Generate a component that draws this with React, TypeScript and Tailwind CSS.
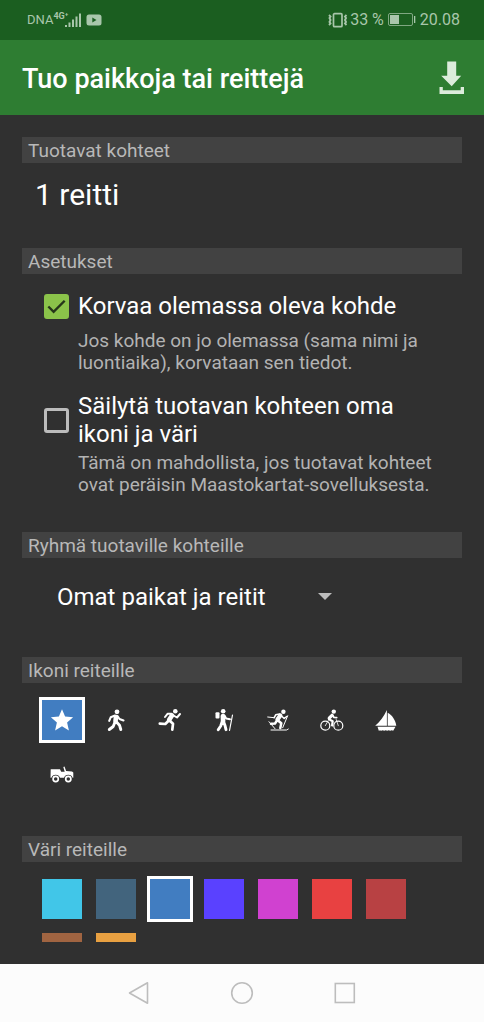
import { ReactNode, useState } from "react";
import { clsx } from "clsx";

interface RouteIcon {
  id: string;
  label: string;
  drawing: ReactNode;
}

const ROUTE_ICONS: RouteIcon[] = [
  {
    id: "star",
    label: "Tähti",
    drawing: (
      <path fill="currentColor" d="M12 1.3l3.100 7.100 8 .8-6 5.200 1.800 8-6.900-4.200-6.900 4.200 1.800-8-6-5.200 8-.8z" />
    ),
  },
  {
    id: "walk",
    label: "Kävely",
    drawing: (
      <g fill="none" stroke="currentColor" strokeLinecap="round" strokeLinejoin="round">
        <circle cx="13" cy="3.800" r="2.400" fill="currentColor" stroke="none" />
        <path strokeWidth="4.600" d="M12 9l-.5 4" />
        <path strokeWidth="2.100" d="M11 7.500L6.700 9.300l-1.500 3.500M13.500 8l2 3 4 1.500" />
        <path strokeWidth="2.900" d="M12.500 14l3 3.200 1.300 4.300M11 14l-1.800 4.500-3.900 3" />
      </g>
    ),
  },
  {
    id: "run",
    label: "Juoksu",
    drawing: (
      <g fill="none" stroke="currentColor" strokeLinecap="round" strokeLinejoin="round">
        <circle cx="17.300" cy="3.300" r="2.300" fill="currentColor" stroke="none" />
        <path strokeWidth="4.600" d="M14 7.500l-2.800 4.300" />
        <path strokeWidth="2" d="M13.500 5.800H9.500L7 9M15.500 7.500l3.500 2 3-3.500" />
        <path strokeWidth="2.700" d="M11.500 12.500l3.500 3.300-.7 5.900M10.300 13l-3 3-5.500-.4" />
      </g>
    ),
  },
  {
    id: "hike",
    label: "Vaellus",
    drawing: (
      <g fill="none" stroke="currentColor" strokeLinecap="round" strokeLinejoin="round">
        <circle cx="11.200" cy="3.200" r="2.300" fill="currentColor" stroke="none" />
        <rect x="3.500" y="4.300" width="4" height="6.200" rx="1" fill="currentColor" stroke="none" />
        <path strokeWidth="4.600" d="M10.900 8l.2 5" />
        <path strokeWidth="2" d="M12.500 7.500l1.700 3 3.800.8" />
        <path strokeWidth="2.900" d="M11.500 13.500l1.500 4 1 4.200M10.200 13.500l-1.500 4.500-2.500 3.700" />
        <path strokeWidth="1.200" d="M20.500 7l-3 15.500" />
      </g>
    ),
  },
  {
    id: "ski",
    label: "Hiihto",
    drawing: (
      <g fill="none" stroke="currentColor" strokeLinecap="round" strokeLinejoin="round">
        <circle cx="17.400" cy="3.800" r="2.200" fill="currentColor" stroke="none" />
        <path strokeWidth="4.200" d="M14.300 7.500l-2.800 4" />
        <path strokeWidth="1.600" d="M13.500 6l-3.800.8-1.500 2.900M15.500 8l2.700 2.500 2.500-2" />
        <path strokeWidth="2.500" d="M12 12.500l3.300 2.800-1 4.700M11 12.500l-2 3-4 .3" />
        <path strokeWidth="1" d="M1.700 9l6.500.7M21.700 7.700l-5 12M3 13.700l6 7M5 22h15.500l1.800-1" />
      </g>
    ),
  },
  {
    id: "bike",
    label: "Pyöräily",
    drawing: (
      <g fill="none" stroke="currentColor" strokeLinecap="round" strokeLinejoin="round">
        <circle cx="13.800" cy="3.600" r="2.200" fill="currentColor" stroke="none" />
        <circle cx="5.300" cy="17.700" r="4.500" strokeWidth="1.200" />
        <circle cx="18.300" cy="17.700" r="4.500" strokeWidth="1.200" />
        <path strokeWidth="3.200" d="M12 7.300L9.200 10.200" />
        <path strokeWidth="1.700" d="M12.500 7l1.500 2.500 2.700.2" />
        <path strokeWidth="2.200" d="M9 11.300l3.700 1.900-.6 4.300" />
        <path strokeWidth=".8" d="M5.300 17.700l2.900-5M16.200 11.500l2.100 6.200" />
      </g>
    ),
  },
  {
    id: "boat",
    label: "Veneily",
    drawing: (
      <g fill="currentColor">
        <path d="M12.900 2v15.700H1.200C6 13.500 10 8.500 12.900 2z" />
        <path d="M13.700 4.800c4.500 2.500 7.600 7 8.600 12.900h-8.600z" />
        <path d="M3.500 18.800h18l-2.300 4c-1-.7-2-.7-3 0-1-.7-2-.7-3 0-1-.7-2-.7-3 0-1-.7-2-.7-3 0-.8-.5-1.600-.5-2.400 0z" />
      </g>
    ),
  },
  {
    id: "jeep",
    label: "Maastoauto",
    drawing: (
      <g fill="currentColor">
        <path d="M.7 7.200h9.300l1.200 2.600h3.500L13.300 5l1.200-.4 1.600 4.400 5.900.4 1.300 1.200v5.200h-.7a4.500 4.500 0 0 0-8.600 0h-4a4.500 4.500 0 0 0-8.600 0H.5z" />
        <g fill="none" stroke="currentColor" strokeWidth="1.700">
          <circle cx="5.700" cy="17" r="2.600" />
          <circle cx="18.300" cy="17" r="2.600" />
        </g>
      </g>
    ),
  },
];

const ROUTE_COLORS = [
  { id: "cyan", label: "Syaani", className: "bg-[#41c6e8]" },
  { id: "slate", label: "Siniharmaa", className: "bg-[#42647d]" },
  { id: "blue", label: "Sininen", className: "bg-[#417dc1]" },
  { id: "violet", label: "Violetti", className: "bg-[#5a41ff]" },
  { id: "magenta", label: "Magenta", className: "bg-[#d041d0]" },
  { id: "red", label: "Punainen", className: "bg-[#e84141]" },
  { id: "darkred", label: "Tummanpunainen", className: "bg-[#b84143]" },
  { id: "brown", label: "Ruskea", className: "bg-[#a06441]" },
  { id: "orange", label: "Oranssi", className: "bg-[#e8a041]" },
];

function StatusBar() {
  return (
    <div className="flex h-10 shrink-0 items-center justify-between bg-[#1b5e20] pl-[27px] pr-6 text-[#a9c6ab]">
      <div className="flex items-center">
        <span className="text-[13px]">DNA</span>
        <div className="flex h-4">
          <span className="text-[9px] leading-[9px] font-bold">4G⁺</span>
          <svg className="-ml-1 h-4 w-[18px]" viewBox="0 0 18 16" fill="currentColor" aria-hidden="true">
            <path d="M1 13h2v2H1zM4.500 10.500h2V15h-2zM8 7.500h2V15H8zM11.500 4.500h2V15h-2zM15 1.500h2V15h-2z" />
          </svg>
        </div>
        <svg className="ml-1 h-3 w-4" viewBox="0 0 16 12" aria-hidden="true">
          <rect x=".5" y=".5" width="15" height="11" rx="2.500" fill="currentColor" />
          <path d="M6.300 3.500v5l4.200-2.500z" fill="#1b5e20" />
        </svg>
      </div>
      <div className="flex items-center">
        <svg className="h-4 w-5" viewBox="0 0 20 16" fill="none" stroke="currentColor" aria-hidden="true">
          <rect x="5.500" y="1.700" width="8.500" height="13" rx="1" strokeWidth="1.700" />
          <path strokeWidth="1.900" d="M1 3l1.500 1.500L1.500 6 2.500 8l-1 2 1 1.500L1 13M18.500 3L17 4.500 18 6l-1 2 1 2-1 1.500 1.500 1.500" />
        </svg>
        <span className="ml-0.5 text-base">33 %</span>
        <svg className="mx-1 h-4 w-7" viewBox="0 0 28 16" aria-hidden="true">
          <rect x=".5" y="1.500" width="24" height="12" rx="1.500" fill="none" stroke="currentColor" strokeOpacity=".7" />
          <rect x="2" y="3" width="9" height="9" fill="currentColor" />
          <rect x="26" y="4" width="1.300" height="7" fill="currentColor" />
        </svg>
        <span className="text-base">20.08</span>
      </div>
    </div>
  );
}

function Header() {
  return (
    <header className="flex h-[75px] shrink-0 items-center justify-between bg-[#2e7d32] pl-[22px] pr-5">
      <h1 className="pt-1 text-[27px] font-medium">Tuo paikkoja tai reittejä</h1>
      <button type="button" aria-label="Tuo">
        <svg className="h-[33px] w-[25px] text-[#dcecdc]" viewBox="0 0 25 33" fill="currentColor">
          <path d="M8.200.5h9v14.300h5L12.700 25.200 2.200 14.800h6z" />
          <path d="M.5 26h3.300v3.200h17.900V26H25v7H.5z" />
        </svg>
      </button>
    </header>
  );
}

interface SectionProps {
  title: string;
  children: ReactNode;
}

function Section({ title, children }: SectionProps) {
  return (
    <section>
      <h2 className="mx-[22px] h-[26px] bg-[#424242] pl-1.5 text-[19px] leading-7 text-[#b8b8b8]">{title}</h2>
      {children}
    </section>
  );
}

interface OptionProps {
  id: string;
  title: string;
  description: string;
  checked: boolean;
  onChange: (checked: boolean) => void;
}

function Option({ id, title, description, checked, onChange }: OptionProps) {
  return (
    <div>
      <label htmlFor={id} className="flex min-h-10 items-center gap-[9px]">
        <span className="relative size-[25px] shrink-0">
          <input
            id={id}
            type="checkbox"
            checked={checked}
            onChange={(e) => onChange(e.target.checked)}
            aria-describedby={`${id}-description`}
            className="block size-[25px] appearance-none rounded-[3px] border-[3px] border-[#bcbcbc] checked:border-[#8bc34a] checked:bg-[#8bc34a]"
          />
          {checked && (
            <svg className="pointer-events-none absolute inset-0" viewBox="0 0 26 26" fill="none" aria-hidden="true">
              <path d="M4.500 13l5.500 5.500L21.500 7" stroke="#26361a" strokeWidth="2.500" />
            </svg>
          )}
        </span>
        <span className="text-2xl leading-7">{title}</span>
      </label>
      <p id={`${id}-description`} className="mt-1 pl-[34px] text-[19px] leading-[22px] text-[#b3b3b3]">
        {description}
      </p>
    </div>
  );
}

function NavigationBar() {
  return (
    <nav className="flex h-[58px] shrink-0 items-center justify-center bg-[#fcfcfc] text-[#bdbdbd]">
      <button type="button" aria-label="Takaisin" className="flex w-[103px] justify-center">
        <svg className="size-6" viewBox="0 0 24 24" fill="none" stroke="currentColor" strokeWidth="1.600">
          <path strokeLinejoin="round" d="M20.500 1.800v20.400L2.500 12z" />
        </svg>
      </button>
      <button type="button" aria-label="Koti" className="flex w-[103px] justify-center">
        <svg className="size-6" viewBox="0 0 24 24" fill="none" stroke="currentColor" strokeWidth="1.600">
          <circle cx="12" cy="12" r="10.300" />
        </svg>
      </button>
      <button type="button" aria-label="Viimeisimmät" className="flex w-[103px] justify-center">
        <svg className="size-6" viewBox="0 0 24 24" fill="none" stroke="currentColor" strokeWidth="1.600">
          <rect x="2.300" y="2.500" width="19" height="19" />
        </svg>
      </button>
    </nav>
  );
}

export default function App() {
  const [replace, setReplace] = useState(true);
  const [keepStyle, setKeepStyle] = useState(false);
  const [icon, setIcon] = useState("star");
  const [color, setColor] = useState("blue");

  return (
    <div className="flex h-screen flex-col bg-[#303030] font-[Roboto,sans-serif] text-white">
      <StatusBar />
      <Header />

      <main className="mt-[22px] mb-[22px] min-h-0 flex-1 overflow-y-auto [scrollbar-width:none]">
        <Section title="Tuotavat kohteet">
          <p className="px-[35px] pt-3 pb-[33px] text-[30px] leading-10">1 reitti</p>
        </Section>

        <Section title="Asetukset">
          <div className="flex flex-col gap-[18px] pt-3 pr-9 pb-9 pl-11">
            <Option
              id="replace"
              title="Korvaa olemassa oleva kohde"
              description="Jos kohde on jo olemassa (sama nimi ja luontiaika), korvataan sen tiedot."
              checked={replace}
              onChange={setReplace}
            />
            <Option
              id="keep-style"
              title="Säilytä tuotavan kohteen oma ikoni ja väri"
              description="Tämä on mahdollista, jos tuotavat kohteet ovat peräisin Maastokartat-sovelluksesta."
              checked={keepStyle}
              onChange={setKeepStyle}
            />
          </div>
        </Section>

        <Section title="Ryhmä tuotaville kohteille">
          <div className="px-[57px] pt-[19px] pb-10">
            <div className="relative w-[275px]">
              <select aria-label="Ryhmä tuotaville kohteille" className="block h-10 w-full appearance-none text-2xl">
                <option>Omat paikat ja reitit</option>
              </select>
              <svg
                className="pointer-events-none absolute top-4 right-0 h-[7px] w-[14px] text-[#bdbdbd]"
                viewBox="0 0 14 7"
                fill="currentColor"
                aria-hidden="true"
              >
                <path d="M0 0h14L7 7z" />
              </svg>
            </div>
          </div>
        </Section>

        <Section title="Ikoni reiteille">
          <div role="radiogroup" aria-label="Ikoni reiteille" className="flex flex-wrap pt-2.5 pr-5 pb-[35px] pl-[35px]">
            {ROUTE_ICONS.map(({ id, label, drawing }) => (
              <label key={id} className="relative flex size-[54px] items-center justify-center">
                <input
                  type="radio"
                  name="icon"
                  aria-label={label}
                  checked={icon === id}
                  onChange={() => setIcon(id)}
                  className="absolute inset-0 appearance-none"
                />
                <span
                  className={clsx(
                    "flex size-[46px] items-center justify-center border-[3px]",
                    icon === id ? "border-white bg-[#417dc1]" : "border-transparent"
                  )}
                >
                  <svg className="size-6 shrink-0" viewBox="0 0 24 24" aria-hidden="true">
                    {drawing}
                  </svg>
                </span>
              </label>
            ))}
          </div>
        </Section>

        <Section title="Väri reiteille">
          <div role="radiogroup" aria-label="Väri reiteille" className="flex flex-wrap pt-2.5 pr-5 pl-[35px]">
            {ROUTE_COLORS.map(({ id, label, className }) => (
              <label key={id} className="relative flex size-[54px] items-center justify-center">
                <input
                  type="radio"
                  name="color"
                  aria-label={label}
                  checked={color === id}
                  onChange={() => setColor(id)}
                  className="absolute inset-0 appearance-none"
                />
                <span className={clsx("size-10", className, color === id && "ring-3 ring-white")} />
              </label>
            ))}
          </div>
        </Section>
      </main>

      <NavigationBar />
    </div>
  );
}
